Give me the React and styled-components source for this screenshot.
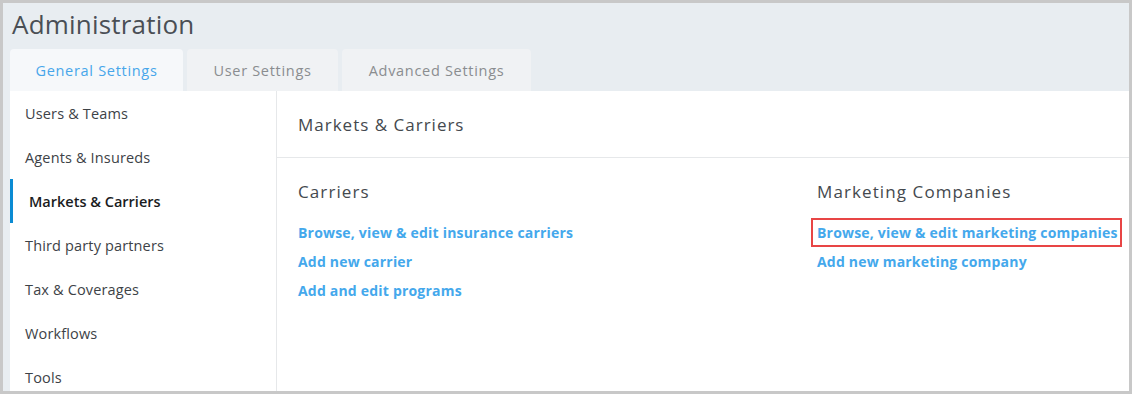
import styled, { createGlobalStyle } from "styled-components";

const GlobalStyle = createGlobalStyle`
  html, body {
    margin: 0;
    padding: 0;
    background: #fff;
  }
  * {
    box-sizing: border-box;
  }
`;

const Frame = styled.div`
  width: 1132px;
  height: 394px;
  border: 3px solid #c8c8c8;
  background: #e8edf1;
  font-family: "Open Sans", "Lato", sans-serif;
  display: flex;
  flex-direction: column;
  overflow: hidden;
`;

const Title = styled.h1`
  flex-shrink: 0;
  margin: 0;
  padding: 3px 0 0 9px;
  height: 46px;
  font-size: 26px;
  line-height: 36px;
  font-weight: 400;
  color: #4a4f55;
  letter-spacing: 0.2px;
`;

const Tabs = styled.div`
  flex-shrink: 0;
  display: flex;
  gap: 4px;
  padding-left: 7px;
  height: 42px;
`;

const Tab = styled.div`
  width: ${(p) => p.width}px;
  display: flex;
  align-items: center;
  justify-content: center;
  border-radius: 4px 4px 0 0;
  background: ${(p) => (p.active ? "#f6f8fa" : "#f0f2f4")};
  color: ${(p) => (p.active ? "#47a6ea" : "#8a8d90")};
  font-size: 14.5px;
  letter-spacing: 0.7px;
`;

const Panel = styled.div`
  flex: 1;
  min-height: 0;
  overflow: hidden;
  margin-left: 7px;
  background: #fff;
  display: flex;
`;

const Sidebar = styled.nav`
  width: 267px;
  flex-shrink: 0;
  border-right: 1px solid #e6e8ea;
  display: flex;
  flex-direction: column;
`;

const NavItem = styled.div`
  flex-shrink: 0;
  height: 44px;
  display: flex;
  align-items: center;
  padding-left: ${(p) => (p.active ? "16px" : "15px")};
  border-left: ${(p) => (p.active ? "3px solid #0b8bd3" : "none")};
  font-size: 14.5px;
  font-weight: ${(p) => (p.active ? 600 : 400)};
  color: ${(p) => (p.active ? "#1a1c1e" : "#3d4247")};
  letter-spacing: ${(p) => (p.active ? "0" : "0.15px")};
`;

const Main = styled.section`
  flex: 1;
  display: flex;
  flex-direction: column;
`;

const MainHeader = styled.div`
  height: 67px;
  border-bottom: 1px solid #e6e8ea;
  display: flex;
  align-items: center;
  padding-left: 21px;
  font-size: 17px;
  color: #44494e;
  letter-spacing: 1px;
`;

const Columns = styled.div`
  display: grid;
  grid-template-columns: 519px 1fr;
  padding: 22px 0 0 21px;
`;

const Column = styled.div`
  display: flex;
  flex-direction: column;
`;

const ColumnTitle = styled.div`
  font-size: 17px;
  color: #44494e;
  letter-spacing: 1.1px;
  height: 24px;
  line-height: 24px;
  margin-bottom: 14px;
`;

const LinkItem = styled.a`
  display: block;
  height: 29px;
  line-height: 29px;
  font-size: 14px;
  font-weight: 700;
  color: #44a8ec;
  text-decoration: none;
  letter-spacing: 0.2px;
  width: fit-content;
  position: relative;
  ${(p) =>
    p.highlight &&
    `
    &::after {
      content: "";
      position: absolute;
      left: -6px;
      right: -4px;
      top: 0;
      bottom: 0;
      border: 2px solid #e84545;
    }
  `}
`;

const navItems = [
  "Users & Teams",
  "Agents & Insureds",
  "Markets & Carriers",
  "Third party partners",
  "Tax & Coverages",
  "Workflows",
  "Tools",
];

export default function App() {
  return (
    <>
      <GlobalStyle />
      <Frame>
        <Title>Administration</Title>
        <Tabs>
          <Tab active width={173}>General Settings</Tab>
          <Tab width={151}>User Settings</Tab>
          <Tab width={189}>Advanced Settings</Tab>
        </Tabs>
        <Panel>
          <Sidebar>
            {navItems.map((item) => (
              <NavItem key={item} active={item === "Markets & Carriers"}>
                {item}
              </NavItem>
            ))}
          </Sidebar>
          <Main>
            <MainHeader>Markets &amp; Carriers</MainHeader>
            <Columns>
              <Column>
                <ColumnTitle>Carriers</ColumnTitle>
                <LinkItem>Browse, view &amp; edit insurance carriers</LinkItem>
                <LinkItem>Add new carrier</LinkItem>
                <LinkItem>Add and edit programs</LinkItem>
              </Column>
              <Column>
                <ColumnTitle>Marketing Companies</ColumnTitle>
                <LinkItem highlight>Browse, view &amp; edit marketing companies</LinkItem>
                <LinkItem>Add new marketing company</LinkItem>
              </Column>
            </Columns>
          </Main>
        </Panel>
      </Frame>
    </>
  );
}
